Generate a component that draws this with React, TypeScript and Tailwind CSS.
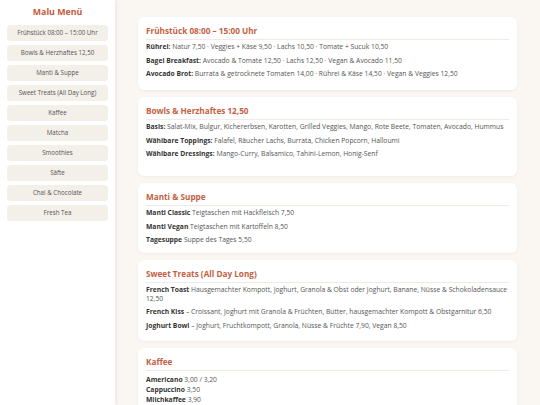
const nav = [
  "Frühstück 08:00 – 15:00 Uhr",
  "Bowls & Herzhaftes 12,50",
  "Manti & Suppe",
  "Sweet Treats (All Day Long)",
  "Kaffee",
  "Matcha",
  "Smoothies",
  "Säfte",
  "Chai & Chocolate",
  "Fresh Tea",
];

type Item = { label: string; text: string };
type Section = { title: string; items: Item[]; tight?: boolean; pb: string };

const sections: Section[] = [
  {
    title: "Frühstück 08:00 – 15:00 Uhr",
    pb: "pb-[11.5px]",
    items: [
      { label: "Rührei:", text: "Natur 7,50 · Veggies + Käse 9,50 · Lachs 10,50 · Tomate + Sucuk 10,50" },
      { label: "Bagel Breakfast:", text: "Avocado & Tomate 12,50 · Lachs 12,50 · Vegan & Avocado 11,50" },
      { label: "Avocado Brot:", text: "Burrata & getrocknete Tomaten 14,00 · Rührei & Käse 14,50 · Vegan & Veggies 12,50" },
    ],
  },
  {
    title: "Bowls & Herzhaftes 12,50",
    pb: "pb-[17.5px]",
    items: [
      { label: "Basis:", text: "Salat-Mix, Bulgur, Kichererbsen, Karotten, Grilled Veggies, Mango, Rote Beete, Tomaten, Avocado, Hummus" },
      { label: "Wählbare Toppings:", text: "Falafel, Räucher Lachs, Burrata, Chicken Popcorn, Halloumi" },
      { label: "Wählbare Dressings:", text: "Mango-Curry, Balsamico, Tahini-Lemon, Honig-Senf" },
    ],
  },
  {
    title: "Manti & Suppe",
    pb: "pb-[8.5px]",
    items: [
      { label: "Manti Classic", text: "Teigtaschen mit Hackfleisch 7,50" },
      { label: "Manti Vegan", text: "Teigtaschen mit Kartoffeln 8,50" },
      { label: "Tagesuppe", text: "Suppe des Tages 5,50" },
    ],
  },
  {
    title: "Sweet Treats (All Day Long)",
    pb: "pb-[11px]",
    items: [
      { label: "French Toast", text: "Hausgemachter Kompott, Joghurt, Granola & Obst oder Joghurt, Banane, Nüsse & Schokoladensauce 12,50" },
      { label: "French Kiss", text: "– Croissant, Joghurt mit Granola & Früchten, Butter, hausgemachter Kompott & Obstgarnitur 6,50" },
      { label: "Joghurt Bowl", text: "– Joghurt, Fruchtkompott, Granola, Nüsse & Früchte 7,90, Vegan 8,50" },
    ],
  },
  {
    title: "Kaffee",
    tight: true,
    pb: "pb-[8px]",
    items: [
      { label: "Americano", text: "3,00 / 3,20" },
      { label: "Cappuccino", text: "3,50" },
      { label: "Milchkaffee", text: "3,90" },
    ],
  },
];

export default function App() {
  return (
    <div className="flex h-[405px] w-[540px] overflow-hidden bg-[#faf7f2] font-['Open_Sans',sans-serif] text-[#444]">
      <aside className="z-10 flex w-[115px] shrink-0 flex-col bg-white px-[7px] pt-[5px] shadow-[1px_0_4px_rgba(0,0,0,0.08)]">
        <h1 className="mb-[6px] text-center text-[8.8px] leading-[14px] font-bold text-[#c25b3d]">Malu Menü</h1>
        <nav className="flex flex-col gap-[4px]">
          {nav.map((n) => (
            <div
              key={n}
              className="flex h-[16px] items-center justify-center rounded-[4px] bg-[#f3efe9] text-[6.2px] text-[#555]"
            >
              {n}
            </div>
          ))}
        </nav>
      </aside>
      <main className="flex flex-1 flex-col gap-[7px] px-[23px] pt-[17px]">
        {sections.map((s) => (
          <section
            key={s.title}
            className={`shrink-0 rounded-[6px] bg-white px-[8px] pt-[8px] shadow-[0_1px_3px_rgba(0,0,0,0.05)] ${s.pb}`}
          >
            <h2 className="border-b border-[#efeae3] pb-[2px] text-[8.2px] leading-[12px] font-bold text-[#c4603f]">
              {s.title}
            </h2>
            <div className={s.tight ? "mt-[4.5px] flex flex-col gap-[1.5px]" : "mt-[3px] flex flex-col gap-[5px]"}>
              {s.items.map((it) => (
                <p key={it.label} className="text-[6.75px] leading-[8.5px] text-[#555]">
                  <span className="font-bold text-[#333]">{it.label}</span> {it.text}
                </p>
              ))}
            </div>
          </section>
        ))}
      </main>
    </div>
  );
}
